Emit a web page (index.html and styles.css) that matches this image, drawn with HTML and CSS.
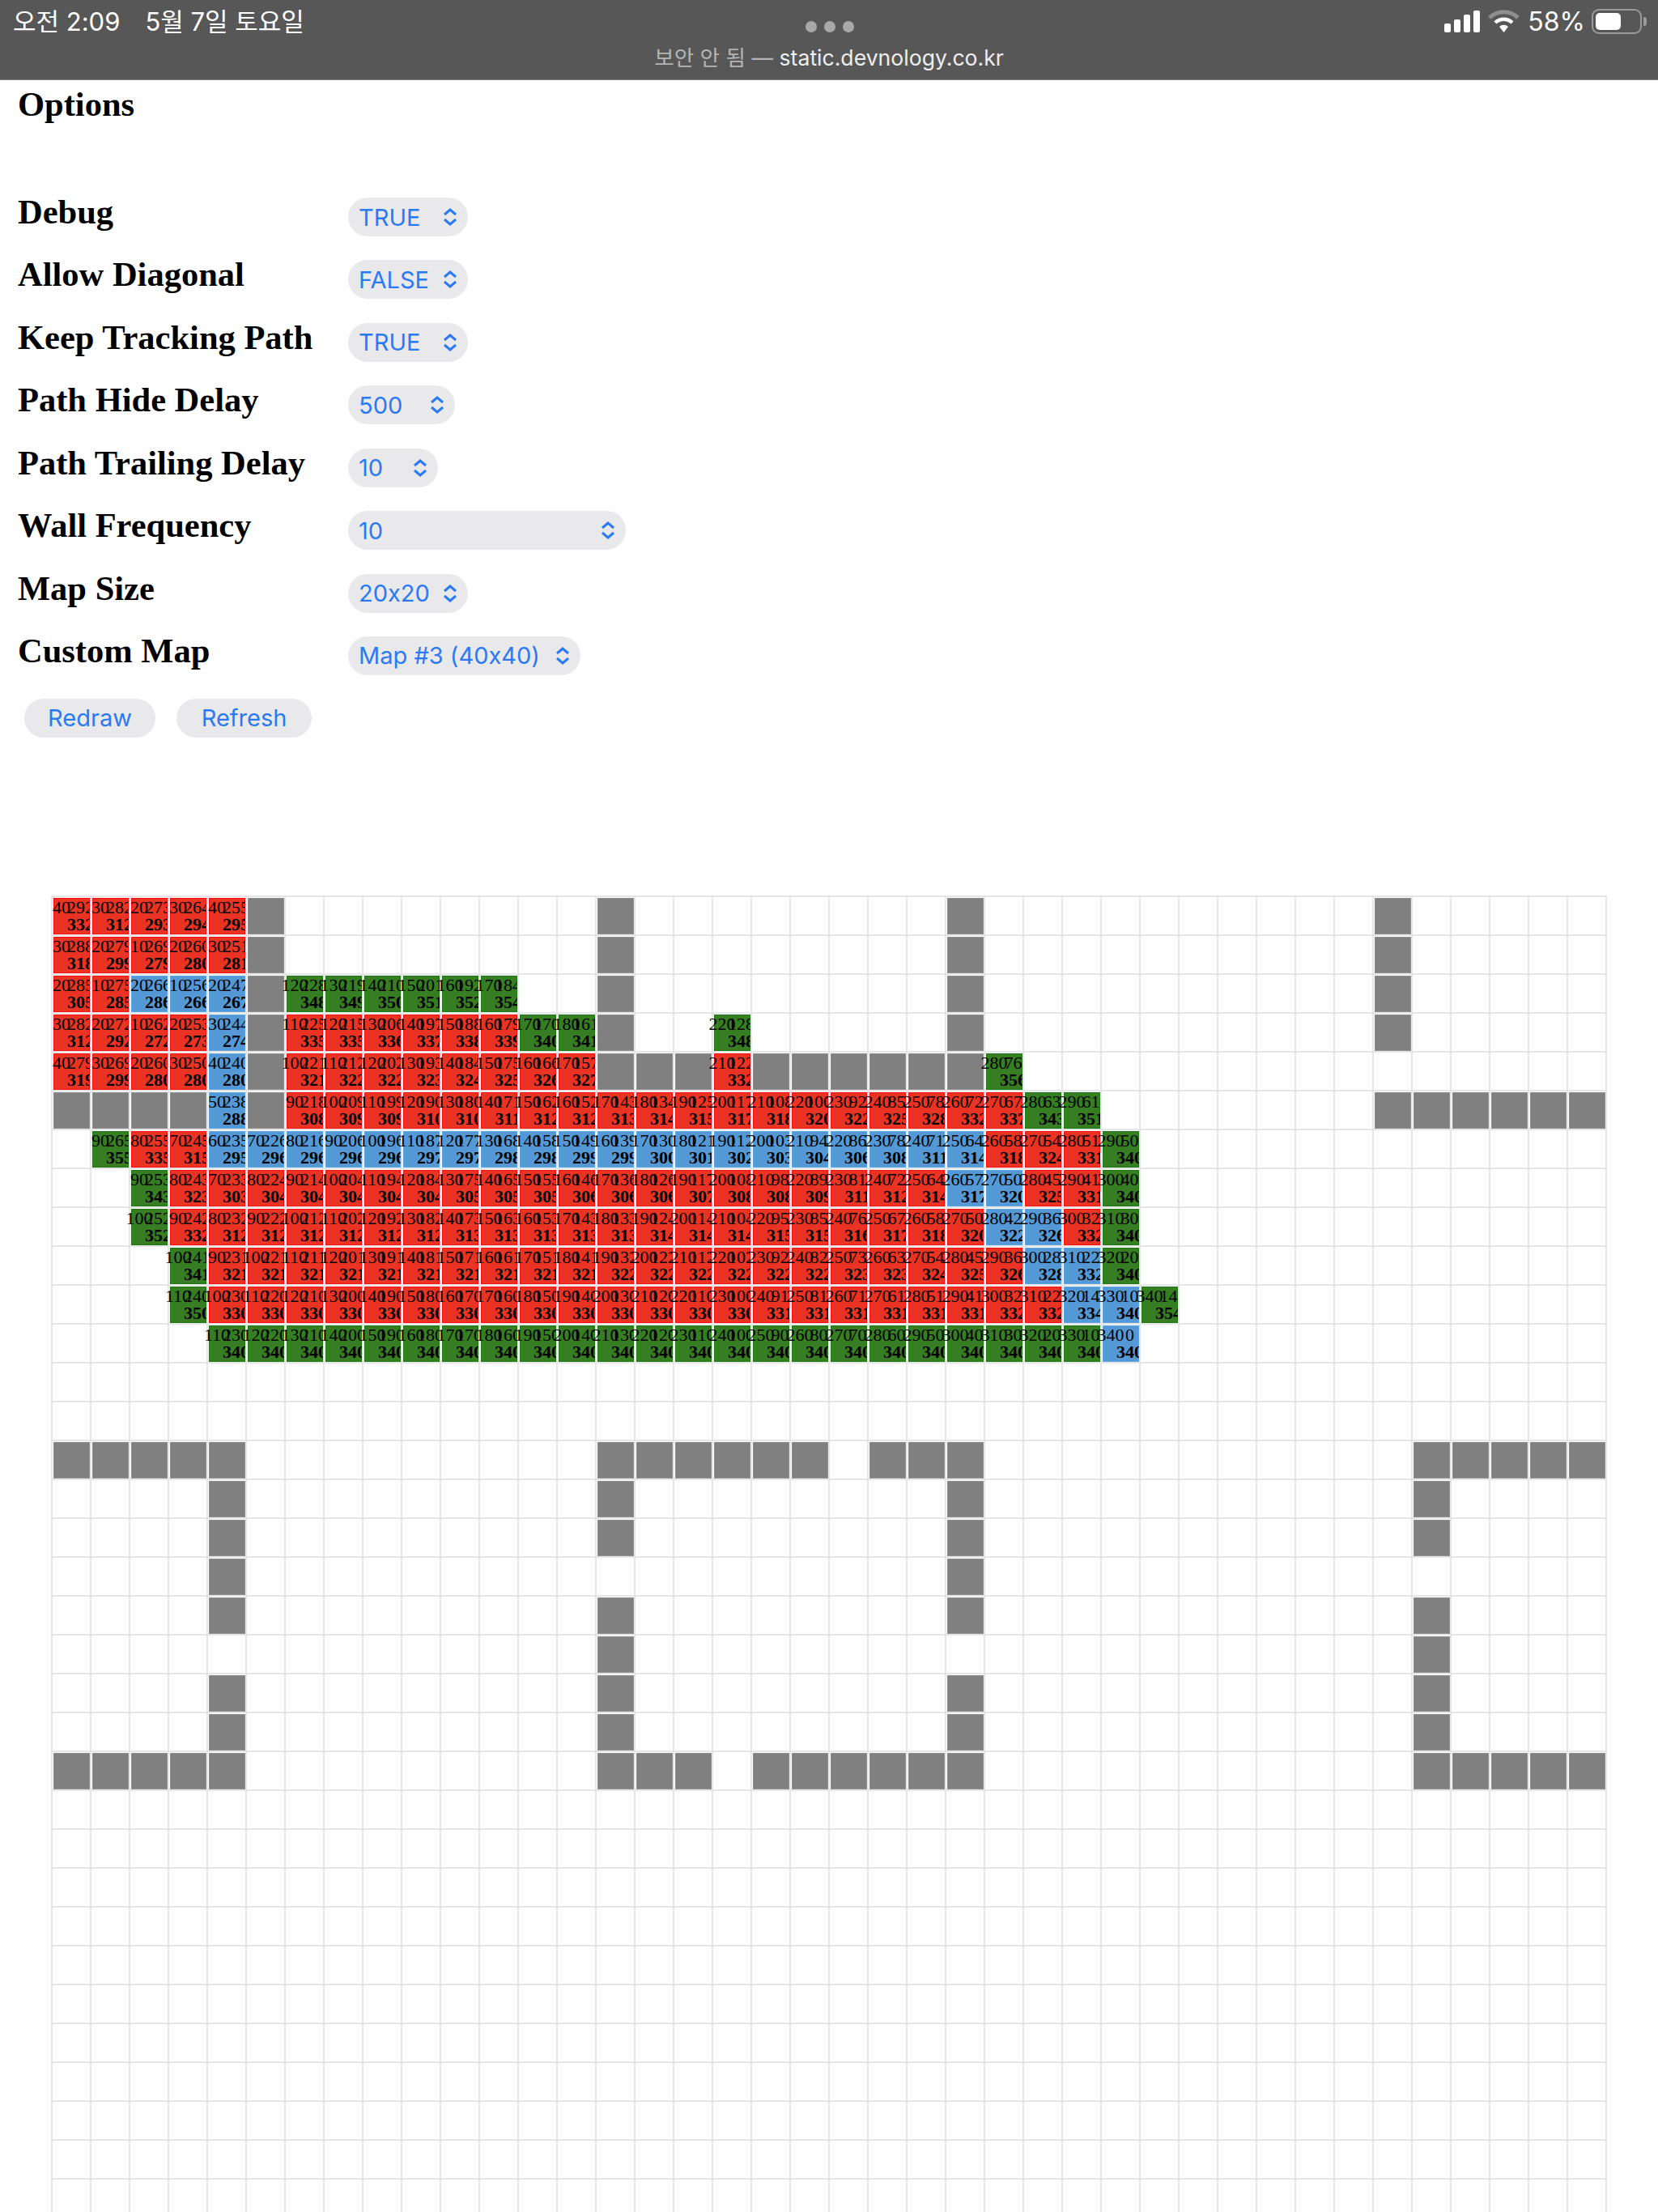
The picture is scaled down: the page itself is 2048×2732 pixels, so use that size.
FILE: index.html
```html
<!DOCTYPE html>
<html>
<head>
    <title>Options</title>
    <link rel="stylesheet" href="styles.css">
</head>
<body>
<div class="page">
    <div class="topbar">
        <div class="status">
            <div class="clock"><span>오전 2:09</span><span>5월 7일 토요일</span></div>
            <div class="dots"><i></i><i></i><i></i></div>
            <div class="sys">
                <svg class="signal" width="46" height="27" viewBox="0 0 46 27">
                    <rect x="0" y="16" width="8" height="11" rx="2"/>
                    <rect x="12" y="11" width="8" height="16" rx="2"/>
                    <rect x="24" y="5" width="8" height="22" rx="2"/>
                    <rect x="36" y="0" width="8" height="27" rx="2"/>
                </svg>
                <svg class="wifi" width="39" height="29" viewBox="0 0 39 29">
                    <path d="M2 10 A25 25 0 0 1 37 10" fill="none" stroke="#8e8e8e" stroke-width="5"/>
                    <path d="M9 16 A15 15 0 0 1 30 16" fill="none" stroke="#fff" stroke-width="4.5"/>
                    <path d="M14 21 A8 8 0 0 1 25 21 L19.5 28 Z" fill="#fff"/>
                </svg>
                <span class="pct">58%</span>
                <div class="battery"><div class="level"></div></div>
                <div class="nub"></div>
            </div>
        </div>
        <div class="url"><span class="warn">보안 안 됨 — </span>static.devnology.co.kr</div>
    </div>

    <div class="title">Options</div>
    <div class="options">
        <div class="name">Debug</div>
        <div class="pick w-bool"><span>TRUE</span><svg width="20" height="22" viewBox="0 0 20 22"><path d="M3 8 L10 2 L17 8 M3 14 L10 20 L17 14"/></svg></div>
        <div class="name">Allow Diagonal</div>
        <div class="pick w-bool"><span>FALSE</span><svg width="20" height="22" viewBox="0 0 20 22"><path d="M3 8 L10 2 L17 8 M3 14 L10 20 L17 14"/></svg></div>
        <div class="name">Keep Tracking Path</div>
        <div class="pick w-bool"><span>TRUE</span><svg width="20" height="22" viewBox="0 0 20 22"><path d="M3 8 L10 2 L17 8 M3 14 L10 20 L17 14"/></svg></div>
        <div class="name">Path Hide Delay</div>
        <div class="pick w-delay"><span>500</span><svg width="20" height="22" viewBox="0 0 20 22"><path d="M3 8 L10 2 L17 8 M3 14 L10 20 L17 14"/></svg></div>
        <div class="name">Path Trailing Delay</div>
        <div class="pick w-trail"><span>10</span><svg width="20" height="22" viewBox="0 0 20 22"><path d="M3 8 L10 2 L17 8 M3 14 L10 20 L17 14"/></svg></div>
        <div class="name">Wall Frequency</div>
        <div class="pick w-wall"><span>10</span><svg width="20" height="22" viewBox="0 0 20 22"><path d="M3 8 L10 2 L17 8 M3 14 L10 20 L17 14"/></svg></div>
        <div class="name">Map Size</div>
        <div class="pick w-bool"><span>20x20</span><svg width="20" height="22" viewBox="0 0 20 22"><path d="M3 8 L10 2 L17 8 M3 14 L10 20 L17 14"/></svg></div>
        <div class="name">Custom Map</div>
        <div class="pick w-map"><span>Map #3 (40x40)</span><svg width="20" height="22" viewBox="0 0 20 22"><path d="M3 8 L10 2 L17 8 M3 14 L10 20 L17 14"/></svg></div>
    </div>
    <div class="actions">
        <button class="redraw">Redraw</button>
        <button class="refresh">Refresh</button>
    </div>

    <div id="map" class="map"></div>
</div>
<script src="grid.js"></script>
</body>
</html>
```

FILE: styles.css
```css
body {
    margin: 0;
    background-color: white;
    font-family: "Liberation Serif", "Noto Sans CJK KR", serif;
}
.page {
    height: 2732px;
    overflow: hidden;
}

/* browser chrome at the top */
.topbar {
    height: 98px;
    background-color: #575757;
    border-bottom: 1px solid #7a7a7a;
    font-family: Inter, "Noto Sans CJK KR", sans-serif;
    color: white;
}
.status {
    display: grid;
    grid-template-columns: 1fr auto 1fr;
    align-items: center;
    height: 52px;
    padding: 0 14px 0 16px;
}
.clock {
    display: flex;
    gap: 31px;
    padding-bottom: 3px;
    font-size: 31px;
}
.dots {
    display: flex;
    gap: 9px;
    padding-top: 14px;
}
.dots i {
    width: 14px;
    height: 14px;
    border-radius: 50%;
    background-color: #a8a8a8;
}
.sys {
    display: flex;
    align-items: center;
    justify-content: flex-end;
}
.sys svg {
    fill: white;
}
.wifi {
    margin-left: 8px;
}
.pct {
    margin-left: 10px;
    font-size: 32px;
}
.battery {
    width: 62px;
    height: 31px;
    margin-left: 8px;
    padding: 3px;
    box-sizing: border-box;
    border: 2px solid #9a9a9a;
    border-radius: 9px;
}
.level {
    width: 31px;
    height: 100%;
    background-color: white;
    border-radius: 5px;
}
.nub {
    width: 4px;
    height: 11px;
    margin-left: 2px;
    background-color: #9a9a9a;
    border-radius: 0 3px 3px 0;
}
.url {
    font-size: 26.6px;
    line-height: 38px;
    text-align: center;
    color: #eeeeee;
}
.warn {
    color: #b4b4b4;
}

/* options form */
.title {
    font-size: 42.5px;
    font-weight: bold;
    line-height: 48px;
    padding: 6px 0 0 22px;
    height: 139px;
}
.options {
    display: grid;
    grid-template-columns: 408px auto;
    justify-items: start;
    row-gap: 29.43px;
    padding-left: 22px;
}
.name {
    font-size: 42.5px;
    font-weight: bold;
    line-height: 36px;
}
.pick, .actions button {
    height: 48px;
    box-sizing: border-box;
    border: 0;
    border-radius: 24px;
    background-color: #e9e9eb;
    font-family: Inter, sans-serif;
    font-feature-settings: "calt" 0;
    font-size: 29px;
    color: #2b7af5;
}
.pick {
    display: flex;
    align-items: center;
    justify-content: space-between;
    padding: 0 12px 0 13px;
}
.pick svg {
    fill: none;
    stroke: #2b7af5;
    stroke-width: 3;
}
.w-bool { width: 148px; }
.w-delay { width: 132px; }
.w-trail { width: 111px; }
.w-wall { width: 343px; }
.w-map { width: 287px; }
.actions {
    display: flex;
    gap: 26px;
    padding: 29px 0 0 30px;
}
.redraw { width: 162px; }
.refresh { width: 167px; }
.actions button {
    padding: 0;
}

/* pathfinding map */
.map {
    display: grid;
    grid-template-columns: repeat(40, 48px);
    grid-auto-rows: 48px;
    width: 1920px;
    margin: 195px 0 0 63px;
    border-top: 1px solid #e6e6e6;
    border-left: 1px solid #e6e6e6;
    border-right: 1px solid #e6e6e6;
}
.cell {
    box-sizing: border-box;
    padding: 1px 0 0 1px;
    border: 1px solid #e6e6e6;
}
.fill {
    position: relative;
    height: 100%;
    box-sizing: border-box;
    border: 1px solid;
    font-size: 22px;
    line-height: 21px;
    color: black;
}
.wall { background-color: #808080; border-color: #8e8e8e; }
.red { background-color: #ea3323; border-color: #ff0d0d; }
.blue { background-color: #5498d5; border-color: #5aa5e6; }
.green { background-color: #377d22; border-color: #1c7a14; }
.clip {
    position: absolute;
    top: 0;
    right: -1px;
    bottom: 0;
    left: 0;
    overflow: hidden;
    padding-left: 16px;
}
.h, .f {
    width: 33px;
    text-align: center;
    white-space: nowrap;
}
.f {
    font-weight: bold;
}
.g {
    position: absolute;
    top: 0;
    left: -11px;
    width: 40px;
    text-align: center;
}
```

FILE: grid.js
```js
// walls per row: column numbers
var walls = {
    0: [5, 14, 23, 34],
    1: [5, 14, 23, 34],
    2: [5, 14, 23, 34],
    3: [5, 14, 23, 34],
    4: [5, 14, 15, 16, 18, 19, 20, 21, 22, 23],
    5: [0, 1, 2, 3, 5, 34, 35, 36, 37, 38, 39],
    14: [0, 1, 2, 3, 4, 14, 15, 16, 17, 18, 19, 21, 22, 23, 35, 36, 37, 38, 39],
    15: [4, 14, 23, 35],
    16: [4, 14, 23, 35],
    17: [4, 23],
    18: [4, 14, 23, 35],
    19: [14, 35],
    20: [4, 14, 23, 35],
    21: [4, 14, 23, 35],
    22: [0, 1, 2, 3, 4, 14, 15, 16, 18, 19, 20, 21, 22, 23, 35, 36, 37, 38, 39]
};

// visited nodes: [row, first column, "g/h+type ..."]
var nodes = [
    [0, 0, "40/292r 30/282r 20/273r 30/264r 40/255r"],
    [1, 0, "30/288r 20/279r 10/269r 20/260r 30/251r"],
    [2, 0, "20/285r 10/275r 20/266b 10/256b 20/247b"],
    [2, 6, "120/228g 130/219g 140/210g 150/201g 160/192g 170/184g"],
    [3, 0, "30/282r 20/272r 10/262r 20/253r 30/244b"],
    [3, 6, "110/225r 120/215r 130/206r 140/197r 150/188r 160/179r 170/170g 180/161g"],
    [3, 17, "220/128g"],
    [4, 0, "40/279r 30/269r 20/260r 30/250r 40/240b"],
    [4, 6, "100/221r 110/212r 120/202r 130/193r 140/184r 150/175r 160/166r 170/157r"],
    [4, 17, "210/122r"],
    [4, 24, "280/76g"],
    [5, 4, "50/238b"],
    [5, 6, "90/218r 100/209r 110/199r 120/190r 130/180r 140/171r 150/162r 160/152r 170/143r 180/134r 190/125r 200/117r 210/108r 220/100r 230/92r 240/85r 250/78r 260/72r 270/67r 280/63g 290/61g"],
    [6, 1, "90/265g 80/255r 70/245r 60/235b 70/226b 80/216b 90/206b 100/196b 110/187b 120/177b 130/168b 140/158b 150/149b 160/139b 170/130b 180/121b 190/112b 200/103b 210/94b 220/86b 230/78b 240/71b 250/64b 260/58r 270/54r 280/51r 290/50g"],
    [7, 2, "90/253g 80/243r 70/233r 80/224r 90/214r 100/204r 110/194r 120/184r 130/175r 140/165r 150/155r 160/146r 170/136r 180/126r 190/117r 200/108r 210/98r 220/89r 230/81r 240/72r 250/64r 260/57b 270/50b 280/45r 290/41r 300/40g"],
    [8, 2, "100/252g 90/242r 80/232r 90/222r 100/212r 110/202r 120/192r 130/182r 140/173r 150/163r 160/153r 170/143r 180/133r 190/124r 200/114r 210/104r 220/95r 230/85r 240/76r 250/67r 260/58r 270/50r 280/42b 290/36b 300/32r 310/30g"],
    [9, 3, "100/241g 90/231r 100/221r 110/211r 120/201r 130/191r 140/181r 150/171r 160/161r 170/151r 180/141r 190/132r 200/122r 210/112r 220/102r 230/92r 240/82r 250/73r 260/63r 270/54r 280/45r 290/36r 300/28b 310/22b 320/20g"],
    [10, 3, "110/240g 100/230r 110/220r 120/210r 130/200r 140/190r 150/180r 160/170r 170/160r 180/150r 190/140r 200/130r 210/120r 220/110r 230/100r 240/91r 250/81r 260/71r 270/61r 280/51r 290/41r 300/32r 310/22r 320/14b 330/10b 340/14g"],
    [11, 4, "110/230g 120/220g 130/210g 140/200g 150/190g 160/180g 170/170g 180/160g 190/150g 200/140g 210/130g 220/120g 230/110g 240/100g 250/90g 260/80g 270/70g 280/60g 290/50g 300/40g 310/30g 320/20g 330/10g 340/0b"]
];

var typeClass = { r: "red", b: "blue", g: "green" };
var visited = {};
nodes.forEach(function (line) {
    line[2].split(" ").forEach(function (token, i) {
        visited[line[0] + "," + (line[1] + i)] = token;
    });
});

function makeNode(token) {
    var parts = token.slice(0, -1).split("/");
    var g = parseInt(parts[0], 10);
    var h = parseInt(parts[1], 10);
    return '<div class="fill ' + typeClass[token.slice(-1)] + '">' +
        '<div class="clip"><div class="h">' + h + '</div><div class="f">' + (g + h) + '</div></div>' +
        '<div class="g">' + g + '</div></div>';
}

var html = "";
for (var row = 0; row < 34; row++) {
    for (var col = 0; col < 40; col++) {
        var inner = "";
        if (walls[row] && walls[row].includes(col)) {
            inner = '<div class="fill wall"></div>';
        } else if (visited[row + "," + col]) {
            inner = makeNode(visited[row + "," + col]);
        }
        html += '<div class="cell">' + inner + '</div>';
    }
}
document.getElementById("map").innerHTML = html;
```
